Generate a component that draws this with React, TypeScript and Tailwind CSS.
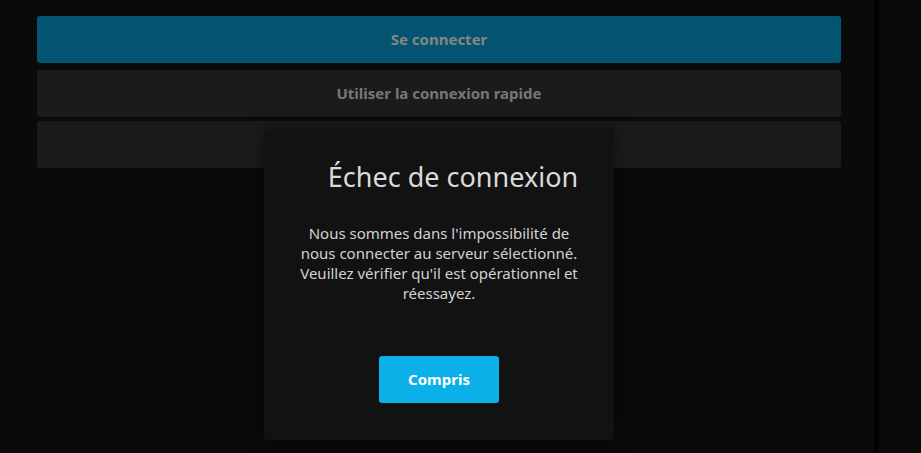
import React from 'react';

const font = { fontFamily: '"Noto Sans", "Open Sans", sans-serif' };

const App: React.FC = () => {
  return (
    <div className="relative w-[921px] h-[453px] overflow-hidden bg-[#0a0a0a]" style={font}>
      <div className="flex h-full">
        <div className="flex-1 pl-[37px] pr-[33px] pt-[16px]">
          <button className="w-full h-[47px] rounded-[3px] bg-[#025470] text-[15px] font-bold text-[#868686]">
            Se connecter
          </button>
          <button className="mt-[7px] w-full h-[47px] rounded-[3px] bg-[#1b1b1b] text-[15px] font-bold text-[#777777]">
            Utiliser la connexion rapide
          </button>
          <button className="mt-[4px] w-full h-[47px] rounded-[3px] bg-[#1b1b1b]" />
        </div>
        <div className="w-[5px] bg-[#030303]" />
        <div className="w-[42px]" />
      </div>

      {/* dialog */}
      <div className="absolute left-[264px] top-[129px] w-[350px] h-[311px] rounded-[3px] bg-[#121212] shadow-[0_0_20px_rgba(0,0,0,0.45)] flex flex-col items-center px-[30px]">
        <h2 className="mt-[31px] pl-[28px] text-[27px] leading-[33px] font-normal text-[#dadada] whitespace-nowrap">Échec de connexion</h2>
        <p className="mt-[30px] text-center text-[15px] leading-[20px] text-[#d2d2d2]">
          Nous sommes dans l'impossibilité de nous connecter au serveur sélectionné. Veuillez vérifier qu'il est opérationnel et réessayez.
        </p>
        <button className="mt-[53px] w-[120px] h-[47px] rounded-[3px] bg-[#0cb0e8] text-[15px] font-bold text-white">
          Compris
        </button>
      </div>
    </div>
  );
};

export default App;
